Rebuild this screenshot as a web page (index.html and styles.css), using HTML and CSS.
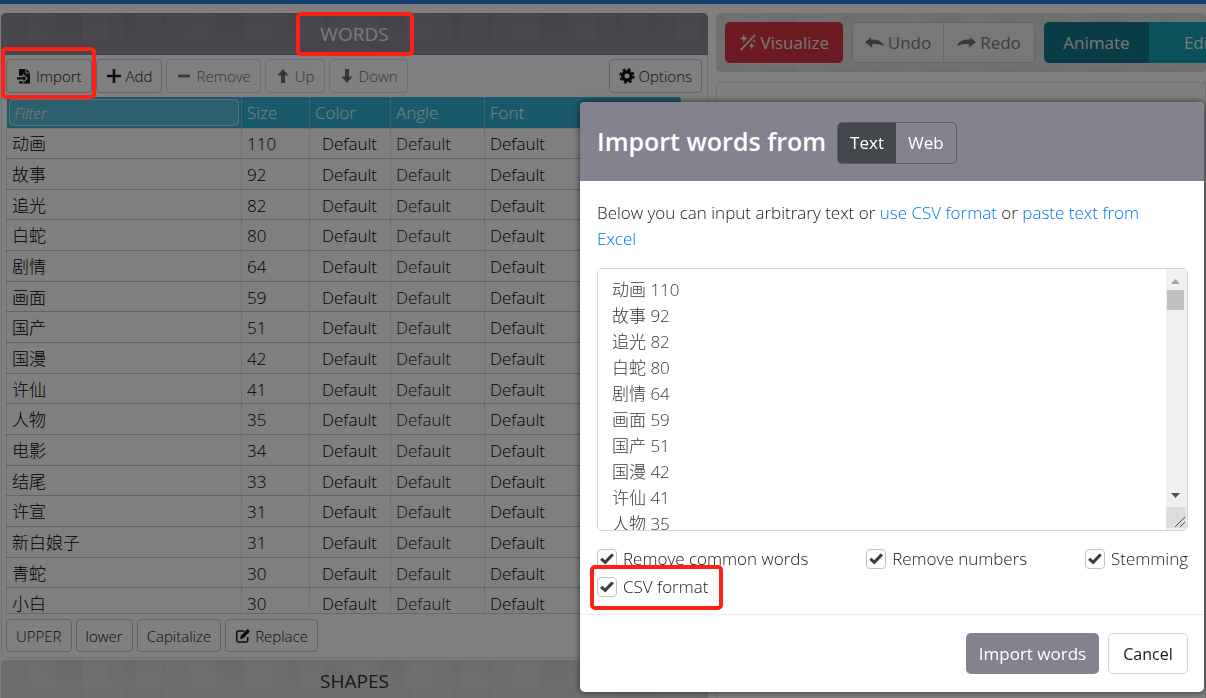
FILE: index.html
```html
<!DOCTYPE html>
<html lang="en">
<head>
<meta charset="utf-8">
<title>Word cloud editor</title>
<link rel="stylesheet" href="styles.css">
</head>
<body>
<div class="app">
  <div class="topbar"></div>
  <main class="workspace">
    <section class="side">
      <div class="words-panel">
        <h2 class="panel-title mosaic">WORDS</h2>
        <div class="tools">
          <button class="btn" type="button"><svg class="icon" viewBox="0 0 16 16"><path d="M3 1h6.500v4.500H14V15.500H3v-2.300h3.800v2.100L12 10.400 6.800 5.500v2.300H3zM10.500 1L14 4.500h-3.500z"/><path d="M1 9.200h6.500V7.600l3 2.800-3 2.800v-1.600H1z"/></svg>Import</button>
          <button class="btn" type="button"><svg class="icon" viewBox="0 0 16 16"><path d="M6.700 1h2.600v5.700H15v2.600H9.300V15H6.700V9.300H1V6.700h5.700z"/></svg>Add</button>
          <button class="btn" type="button" disabled><svg class="icon" viewBox="0 0 16 16"><path d="M2 6.700h12v2.600H2z"/></svg>Remove</button>
          <button class="btn" type="button" disabled><svg class="icon" viewBox="0 0 16 16"><path d="M8 1l5.500 6.500H10V15H6V7.500H2.500z"/></svg>Up</button>
          <button class="btn" type="button" disabled><svg class="icon" viewBox="0 0 16 16"><path d="M8 15L2.500 8.500H6V1h4v7.500h3.500z"/></svg>Down</button>
          <button class="btn options" type="button"><svg class="icon" viewBox="0 0 16 16"><circle cx="8" cy="8" r="4.200" fill="none" stroke="currentColor" stroke-width="3.400"/><circle cx="8" cy="8" r="6.500" fill="none" stroke="currentColor" stroke-width="2.400" stroke-dasharray="2.750 2.355"/></svg>Options</button>
        </div>
        <div class="grid">
          <table class="words">
            <colgroup><col class="c-name"><col class="c-size"><col class="c-color"><col class="c-angle"><col class="c-font"></colgroup>
            <thead><tr><th><input class="filter" type="text" placeholder="Filter" aria-label="Filter"></th><th>Size</th><th>Color</th><th>Angle</th><th>Font</th></tr></thead>
            <tbody>
              <tr><td>动画</td><td>110</td><td>Default</td><td>Default</td><td>Default</td></tr>
              <tr><td>故事</td><td>92</td><td>Default</td><td>Default</td><td>Default</td></tr>
              <tr><td>追光</td><td>82</td><td>Default</td><td>Default</td><td>Default</td></tr>
              <tr><td>白蛇</td><td>80</td><td>Default</td><td>Default</td><td>Default</td></tr>
              <tr><td>剧情</td><td>64</td><td>Default</td><td>Default</td><td>Default</td></tr>
              <tr><td>画面</td><td>59</td><td>Default</td><td>Default</td><td>Default</td></tr>
              <tr><td>国产</td><td>51</td><td>Default</td><td>Default</td><td>Default</td></tr>
              <tr><td>国漫</td><td>42</td><td>Default</td><td>Default</td><td>Default</td></tr>
              <tr><td>许仙</td><td>41</td><td>Default</td><td>Default</td><td>Default</td></tr>
              <tr><td>人物</td><td>35</td><td>Default</td><td>Default</td><td>Default</td></tr>
              <tr><td>电影</td><td>34</td><td>Default</td><td>Default</td><td>Default</td></tr>
              <tr><td>结尾</td><td>33</td><td>Default</td><td>Default</td><td>Default</td></tr>
              <tr><td>许宣</td><td>31</td><td>Default</td><td>Default</td><td>Default</td></tr>
              <tr><td>新白娘子</td><td>31</td><td>Default</td><td>Default</td><td>Default</td></tr>
              <tr><td>青蛇</td><td>30</td><td>Default</td><td>Default</td><td>Default</td></tr>
              <tr><td>小白</td><td>30</td><td>Default</td><td>Default</td><td>Default</td></tr>
            </tbody>
          </table>
        </div>
        <div class="case-tools">
          <button class="btn" type="button">UPPER</button>
          <button class="btn" type="button">lower</button>
          <button class="btn" type="button">Capitalize</button>
          <button class="btn" type="button"><svg class="icon" viewBox="0 0 16 16"><path d="M9.500 3H3.200Q1.800 3 1.800 4.400v8.200Q1.800 14 3.200 14h8.200q1.400 0 1.400-1.400V9" fill="none" stroke="currentColor" stroke-width="1.500"/><path d="M5 11.200l.8-3.400L12.400 1l2.600 2.500-6.700 6.800z"/></svg>Replace</button>
        </div>
      </div>
      <h2 class="panel-title shapes-title mosaic">SHAPES</h2>
    </section>
    <section class="stage">
      <div class="stage-bar mosaic">
        <button class="big visualize" type="button"><svg class="icon-lg" viewBox="0 0 18 18"><path d="M1 16.300L16 .500l1.200 1.100L2.300 17.500z"/><path d="M5 0l1 3.600L9.500 5 6 6l-1 3.500L4 6 .500 5 4 3.600zM13 8.500l.9 3 2.900.9-2.900.9-.9 3-.9-3-2.900-.9 2.900-.9zM15.500 5.500l.5 1.500 1.500.5-1.500.5-.5 1.500-.5-1.500-1.500-.5L15 7z"/></svg>Visualize</button>
        <div class="group">
          <button class="big history" type="button" disabled><svg class="icon-lg" viewBox="0 0 18 18"><path d="M0 8.800L5.500 4v2.400C12 5.600 16.500 8.500 18 12.500 14.500 10.400 10.500 10 6.500 10.800L7 14z"/></svg>Undo</button>
          <button class="big history" type="button" disabled><svg class="icon-lg" viewBox="0 0 18 18"><path d="M18 8.800L12.500 4v2.400C6 5.600 1.500 8.500 0 12.500 3.500 10.400 7.500 10 11.500 10.800L11 14z"/></svg>Redo</button>
        </div>
        <div class="group">
          <button class="big animate" type="button">Animate</button>
          <button class="big edit" type="button">Edit</button>
        </div>
      </div>
      <div class="canvas"></div>
    </section>
  </main>
</div>
<div class="backdrop"></div>

<form class="dialog" role="dialog" aria-labelledby="dialog-title">
  <header class="dialog-head">
    <h1 class="dialog-title" id="dialog-title">Import words from</h1>
    <div class="tabs">
      <button class="tab active" type="button">Text</button>
      <button class="tab" type="button">Web</button>
    </div>
  </header>
  <div class="dialog-body">
    <p class="hint">Below you can input arbitrary text or <a href="#csv">use CSV format</a> or <a href="#excel">paste text from Excel</a></p>
    <div class="editor">
      <textarea class="source" aria-label="Words">动画 110
故事 92
追光 82
白蛇 80
剧情 64
画面 59
国产 51
国漫 42
许仙 41
人物 35</textarea>
      <div class="scroll">
        <svg class="arrow" viewBox="0 0 17 17"><path d="M4 11l4.500-5L13 11z" fill="#a3a3a3"/></svg>
        <div class="thumb"></div>
        <svg class="arrow last" viewBox="0 0 17 17"><path d="M4 6l4.500 5L13 6z" fill="#505050"/></svg>
        <svg class="grip" viewBox="0 0 20 21"><path d="M9 20L19 10M14 20l5-5" stroke="#505050" fill="none"/></svg>
      </div>
    </div>
    <div class="checks">
      <label class="check"><input type="checkbox" checked>Remove common words</label>
      <label class="check"><input type="checkbox" checked>Remove numbers</label>
      <label class="check"><input type="checkbox" checked>Stemming</label>
    </div>
    <div class="checks">
      <label class="check"><input type="checkbox" checked>CSV format</label>
    </div>
  </div>
  <footer class="dialog-foot">
    <button class="big primary" type="submit">Import words</button>
    <button class="big cancel" type="button">Cancel</button>
  </footer>
</form>

<div class="mark mark-words"></div>
<div class="mark mark-import"></div>
<div class="mark mark-csv"></div>
</body>
</html>
```

FILE: styles.css
```css
* { box-sizing: border-box; }
body {
  margin: 0;
  font: 300 17px/26px "Open Sans", "Noto Sans CJK SC", sans-serif;
  color: #15181b;
  overflow: hidden;
}
button, input, textarea { font: inherit; color: inherit; margin: 0; }
button { white-space: nowrap; }
.app { height: 100vh; overflow: hidden; background: #fff; }
.topbar { height: 4px; background: #247fdc; }
.workspace { display: flex; gap: 8px; padding: 9px 0 0 1px; }
.side { flex: 0 0 707px; }
.mosaic {
  background-image:
    conic-gradient(rgba(0,0,0,.02) 25%, transparent 25% 50%, rgba(255,255,255,.03) 50% 75%, transparent 75%),
    conic-gradient(rgba(255,255,255,.02) 25%, transparent 25% 75%, rgba(0,0,0,.02) 75%);
  background-size: 82px 28px, 54px 54px;
}
.words-panel { border: 1px solid #e0e0e0; border-top: 0; border-radius: 5px; }
.panel-title {
  margin: 0 -1px;
  height: 42px;
  line-height: 42px;
  text-align: center;
  font-size: 19px;
  font-weight: 400;
  color: #f4f4f4;
  background-color: #918c99;
  border-radius: 5px 5px 0 0;
}
.shapes-title { margin: 2px 0 0; color: #2c3035; background-color: #dddde0; }
.tools, .case-tools { display: flex; gap: 4px; padding: 4px 5px 4px 4px; }
.case-tools { padding: 5px 4px; }
.btn {
  display: flex;
  align-items: center;
  gap: 4px;
  height: 34px;
  padding: 0 9px;
  border: 1px solid #c2c2c6;
  border-radius: 4px;
  background: #fff;
  font-size: 15px;
}
.btn:disabled { color: #6d6f73; border-color: #dcdce0; }
.options { margin-left: auto; }
.icon { width: 16px; height: 16px; fill: currentColor; }
.icon-lg { width: 19px; height: 19px; fill: currentColor; }
.grid { height: 517px; margin-left: 4px; overflow: hidden; border-bottom: 1px solid #d0d0d0; }
.words { width: 675px; height: 522px; table-layout: fixed; border-collapse: collapse; color: #000; }
.c-name { width: 235px; }
.c-size { width: 68px; }
.c-color { width: 81px; }
.c-angle { width: 94px; }
.words th {
  height: 31px;
  padding: 2px 5px 0;
  text-align: left;
  font-weight: 300;
  color: #fff;
  background: #34b3d8;
  border-right: 1px dotted #c8d8dc;
}
.words th:first-child { padding: 0 2px; }
.words td { padding: 2px 5px 0; line-height: 24px; border: 1px dotted #c8c8c8; border-bottom: 1px solid #c8c8c8; }
.words td:nth-child(3) { padding-left: 12px; }
.words td:nth-child(4) { color: #202020; }
.filter {
  display: block;
  width: 100%;
  height: 27px;
  padding: 0 5px;
  border: 1px solid #c8dce2;
  border-radius: 4px;
  background: #58c0dc;
}
.filter::placeholder { color: #fff; font-style: italic; font-size: 15px; opacity: 1; }
.case-tools .btn { height: 33px; }
.stage { flex: 1; min-width: 0; }
.stage-bar { display: flex; gap: 9px; padding: 9px; background-color: #e2e2e5; border-radius: 5px; overflow: hidden; }
.group { display: flex; }
.big {
  display: flex;
  align-items: center;
  justify-content: center;
  gap: 4px;
  height: 41px;
  padding: 0 13px;
  border: 1px solid transparent;
  border-radius: 5px;
  font-size: 17px;
  font-weight: 400;
  flex-shrink: 0;
}
.visualize { width: 118px; color: #eee; background: #dc3545; }
.history { width: 92px; padding: 0 8px; background: #f0f0f1; border-color: #cfcfd2; }
.history:disabled { color: #7d7d80; }
.history .icon-lg { color: #707074; }
.group .big:first-child { border-radius: 5px 0 0 5px; }
.group .big:last-child { border-radius: 0 5px 5px 0; }
.history + .history { width: 91px; border-left: 0; }
.animate { width: 105px; color: #eee; background: #117a8b; }
.edit { width: 100px; color: #eee; background: #17a2b8; }
.canvas { height: 620px; margin-top: 10px; border: 1px solid #e0e0e0; border-radius: 5px 0 0 0; }
.backdrop { position: fixed; inset: 0; background: rgba(0,0,0,.5); }

.dialog {
  position: absolute;
  top: 102px;
  right: 2px;
  width: 624px;
  background: #fff;
  border-radius: 5px;
  box-shadow: 0 0 7px rgba(0,0,0,.6);
  overflow: hidden;
}
.dialog-head { display: flex; align-items: flex-start; gap: 11px; padding: 20px 17px 17px; background: #85828f; }
.dialog-title { margin: 0; font-size: 25px; font-weight: 600; line-height: 38px; color: #fff; }
.tabs { display: flex; border: 1px solid #565b68; border-radius: 5px; overflow: hidden; }
.tab { height: 40px; padding: 0 12px; border: 0; background: transparent; color: #fff; font-weight: 400; }
.tab.active { background: #42484e; }
.dialog-body { padding: 19px 16px 13px 17px; }
.hint { margin: 0 0 16px; padding-right: 20px; }
.hint a { color: #0074f0; text-decoration: none; }
.editor { display: flex; height: 263px; border: 1px solid #d2d4dd; border-radius: 5px; overflow: hidden; }
.source {
  flex: 1;
  padding: 8px 14px 0;
  border: 0;
  outline: 0;
  resize: none;
  overflow: hidden;
  background: #fff;
  color: #33383d;
}
.scroll { display: flex; flex-direction: column; width: 21px; background: #f0f0f0; }
.arrow { width: 17px; height: 17px; margin: 4px 1px 0; flex-shrink: 0; }
.thumb { width: 17px; height: 20px; margin-left: 1px; background: #c1c1c1; }
.arrow.last { margin-top: auto; }
.grip { width: 20px; height: 21px; margin: 3px 0 2px; background: #dcdcdc; flex-shrink: 0; }
.checks { display: flex; justify-content: space-between; height: 28px; }
.editor + .checks { margin-top: 14px; }
.check { display: flex; align-items: center; gap: 6px; }
.check input {
  appearance: none;
  display: grid;
  place-items: center;
  width: 20px;
  height: 20px;
  border: 1px solid #c4c4c8;
  border-radius: 4px;
  background: #fff;
}
.check input:checked::before {
  content: "";
  width: 14px;
  height: 12px;
  background: #3c3e40;
  clip-path: polygon(0 56%, 17% 40%, 36% 60%, 82% 4%, 100% 18%, 38% 96%);
}
.dialog-foot { display: flex; justify-content: flex-end; gap: 9px; padding: 18px 16px 18px 17px; border-top: 1px solid #e9e9ee; }
.primary { width: 133px; color: #fff; background: #85828f; }
.cancel { width: 80px; font-size: 16px; background: #fff; border-color: #d4d4d8; }

.mark { position: absolute; border: 4px solid #ff2015; border-radius: 5px; pointer-events: none; }
.mark-words { left: 296px; top: 12px; width: 118px; height: 44px; }
.mark-import { left: 1px; top: 47px; width: 95px; height: 52px; }
.mark-csv { left: 590px; top: 565px; width: 133px; height: 45px; }
```
